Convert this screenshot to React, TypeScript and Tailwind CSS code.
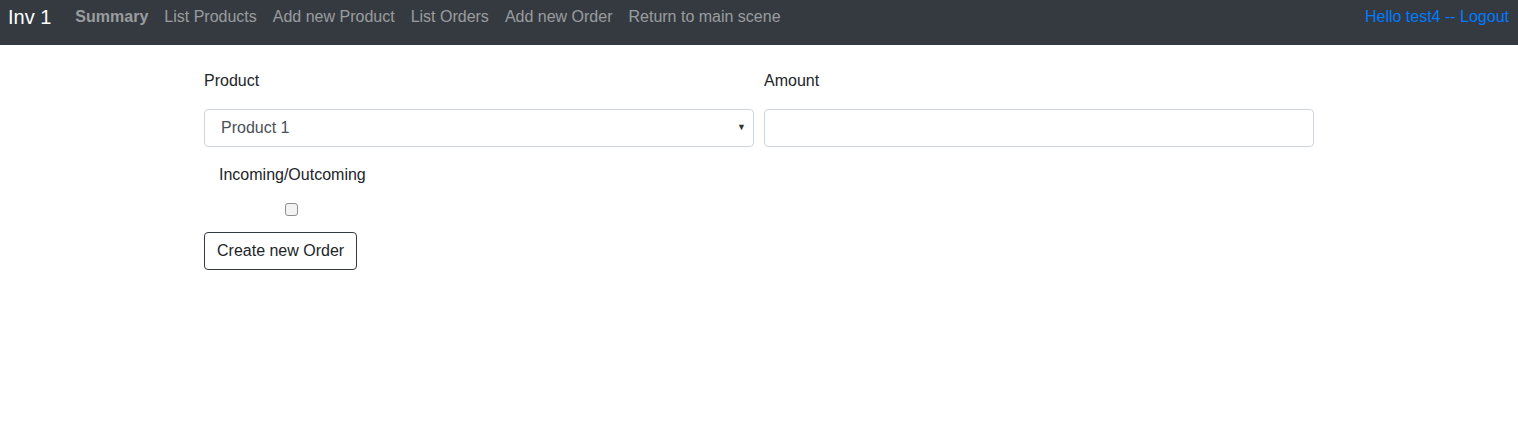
import React from "react";

const links = ["List Products", "Add new Product", "List Orders", "Add new Order", "Return to main scene"];

export default function App() {
  return (
    <div className="min-h-[423px] bg-white font-['Liberation_Sans',Arial,sans-serif] text-[#212529]">
      <nav className="flex h-[45px] items-start justify-between bg-[#343a40] pl-2 pr-[9px]">
        <div className="flex items-start">
          <span className="mr-4 mt-[2px] text-[20px] leading-[30px] text-white">Inv 1</span>
          <span className="mt-[5px] px-2 text-base font-bold leading-6 text-[rgba(255,255,255,0.5)]">Summary</span>
          {links.map((l) => (
            <span key={l} className="mt-[5px] px-2 text-base leading-6 text-[rgba(255,255,255,0.5)]">
              {l}
            </span>
          ))}
        </div>
        <span className="mt-[5px] text-base leading-6 text-[#007bff]">Hello test4 -- Logout</span>
      </nav>

      <div className="mx-auto w-[1110px] pt-[24px]">
        <div className="flex gap-[10px]">
          <div className="w-[550px]">
            <div className="text-base leading-6">Product</div>
            <div className="mt-[16px] flex h-[38px] items-center justify-between rounded-[4px] border border-[#ced4da] pl-4 pr-[7px] text-base text-[#495057]">
              <span>Product 1</span>
              <span className="text-[9px] text-[#333]">▼</span>
            </div>
          </div>
          <div className="w-[550px]">
            <div className="text-base leading-6">Amount</div>
            <div className="mt-[16px] h-[38px] rounded-[4px] border border-[#ced4da]" />
          </div>
        </div>

        <div className="mt-[16px] flex flex-col items-start">
          <div className="pl-[15px] text-base leading-6">Incoming/Outcoming</div>
          <div className="ml-[81px] mt-[16px] h-[13px] w-[13px] rounded-[3px] border border-[#8f8f8f] bg-[#f3f3f3]" />
        </div>

        <button className="mt-[16px] h-[38px] rounded-[4px] border border-[#343a40] px-3 text-base leading-6 text-[#212529]">
          Create new Order
        </button>
      </div>
    </div>
  );
}
